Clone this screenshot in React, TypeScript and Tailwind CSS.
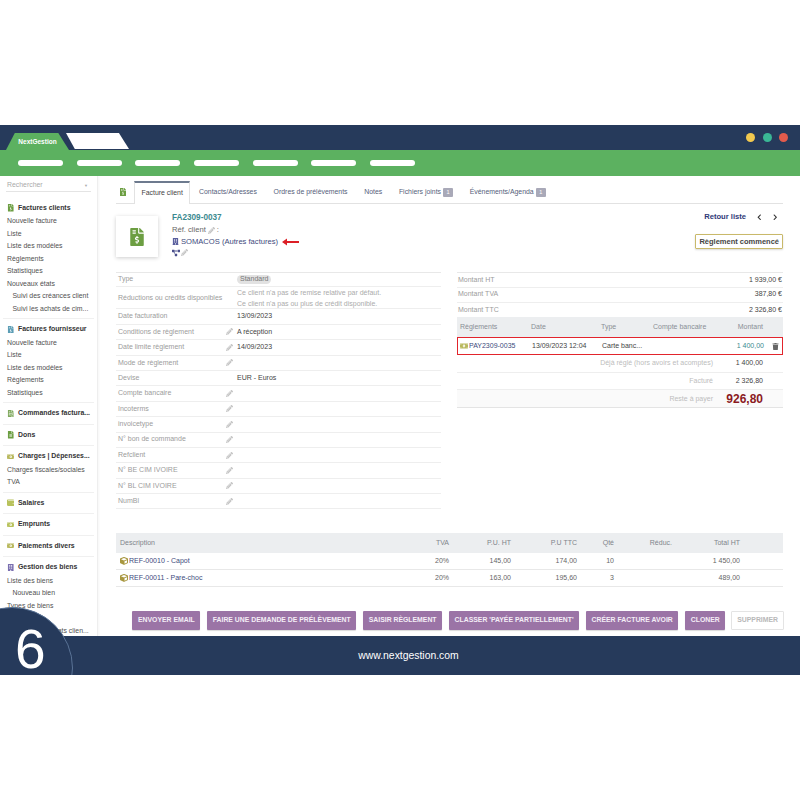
import React from "react";
import {
  FaBuilding,
  FaChevronLeft,
  FaChevronRight,
  FaCube,
  FaFileInvoice,
  FaFileInvoiceDollar,
  FaFileAlt,
  FaMoneyBillAlt,
  FaPencilAlt,
  FaProjectDiagram,
  FaTrash,
  FaWallet,
} from "react-icons/fa";

type Section = {
  title: string;
  icon: React.ReactNode;
  items?: { label: string; sub?: boolean }[];
};

const sections: Section[] = [
  {
    title: "Factures fournisseur",
    icon: <FaFileInvoiceDollar className="text-[#5b9db5]" />,
    items: [
      { label: "Nouvelle facture" },
      { label: "Liste" },
      { label: "Liste des modèles" },
      { label: "Règlements" },
      { label: "Statistiques" },
    ],
  },
  { title: "Commandes factura...", icon: <FaFileInvoice className="text-[#7fa85c]" /> },
  { title: "Dons", icon: <FaFileAlt className="text-[#6c9e42]" /> },
  {
    title: "Charges | Dépenses...",
    icon: <FaMoneyBillAlt className="text-[#b8b85c]" />,
    items: [{ label: "Charges fiscales/sociales" }, { label: "TVA" }],
  },
  { title: "Salaires", icon: <FaWallet className="text-[#b8c25c]" /> },
  { title: "Emprunts", icon: <FaMoneyBillAlt className="text-[#b8c25c]" /> },
  { title: "Paiements divers", icon: <FaMoneyBillAlt className="text-[#b8b85c]" /> },
  {
    title: "Gestion des biens",
    icon: <FaBuilding className="text-[#7a6fb0]" />,
    items: [
      { label: "Liste des biens" },
      { label: "Nouveau bien", sub: true },
      { label: "Types de biens" },
      { label: "Nouveau", sub: true },
      { label: "Suivi des contrats clien...", sub: true },
    ],
  },
];

const firstItems = [
  { label: "Nouvelle facture" },
  { label: "Liste" },
  { label: "Liste des modèles" },
  { label: "Règlements" },
  { label: "Statistiques" },
  { label: "Nouveaux états" },
  { label: "Suivi des créances client", sub: true },
  { label: "Suivi les achats de cim...", sub: true },
];

const fields: { label: string; pencil?: boolean; value?: string }[] = [
  { label: "Date facturation", value: "13/09/2023" },
  { label: "Conditions de règlement", pencil: true, value: "A réception" },
  { label: "Date limite règlement", pencil: true, value: "14/09/2023" },
  { label: "Mode de règlement", pencil: true },
  { label: "Devise", value: "EUR - Euros" },
  { label: "Compte bancaire", pencil: true },
  { label: "Incoterms", pencil: true },
  { label: "invoicetype", pencil: true },
  { label: "N° bon de commande", pencil: true },
  { label: "Refclient", pencil: true },
  { label: "N° BE CIM IVOIRE", pencil: true },
  { label: "N° BL CIM IVOIRE", pencil: true },
  { label: "NumBl", pencil: true },
];

const lines = [
  ["REF-00010 - Capot", "20%", "145,00", "174,00", "10", "", "1 450,00"],
  ["REF-00011 - Pare-choc", "20%", "163,00", "195,60", "3", "", "489,00"],
];

const lineCols = "grid grid-cols-[300px_33px_62px_66px_37px_58px_68px_43px] items-center";
const payCols = "grid grid-cols-[74px_70px_52px_60px_50px_1fr] items-center";
const sumCols = "grid grid-cols-[256px_50px_20px] items-center";

function Pencil({ className = "" }: { className?: string }) {
  return <FaPencilAlt className={`text-[7px] text-[#c4c4c4] ${className}`} />;
}

function SideRow({ label, sub }: { label: string; sub?: boolean }) {
  return (
    <div className={`h-[12.5px] leading-[12.5px] whitespace-nowrap ${sub ? "pl-[12.5px]" : "pl-[7px]"}`}>
      {label}
    </div>
  );
}

function SideTitle({ title, icon }: { title: string; icon: React.ReactNode }) {
  return (
    <div className="h-[14px] flex items-center pl-[6.5px] font-bold text-[#333] whitespace-nowrap">
      <span className="w-[11.5px] text-[7.5px] flex">{icon}</span>
      {title}
    </div>
  );
}

function Sidebar() {
  return (
    <aside className="w-[98px] shrink-0 border-r border-[#eeeeee] text-[6.9px] text-[#505050] shadow-[1px_0_2px_rgba(0,0,0,0.04)]">
      <div className="h-[25px] pt-[4px] px-[6px]">
        <div className="h-[12px] flex items-center justify-between border-b border-[#e4e4e4] text-[#aaaaaa] pl-[1px] pr-[3px]">
          <span>Rechercher</span>
          <span className="text-[4px]">▼</span>
        </div>
      </div>
      <div className="pb-[3px]">
        <SideTitle title="Factures clients" icon={<FaFileInvoiceDollar className="text-[#6c9e42]" />} />
        {firstItems.map((it) => (
          <SideRow key={it.label} {...it} />
        ))}
      </div>
      {sections.map((s) => (
        <div key={s.title}>
          <div className="h-px mx-[3px] bg-[#f0f0f0]" />
          <div className="pt-[3.5px] pb-[3px]">
            <SideTitle title={s.title} icon={s.icon} />
            {s.items?.map((it) => (
              <SideRow key={it.label} {...it} />
            ))}
          </div>
        </div>
      ))}
    </aside>
  );
}

function Tabs() {
  const tabs: { label: string; badge?: boolean }[] = [
    { label: "Contacts/Adresses" },
    { label: "Ordres de prélèvements" },
    { label: "Notes" },
    { label: "Fichiers joints", badge: true },
    { label: "Événements/Agenda", badge: true },
  ];
  return (
    <div className="h-[23px] mt-[5px] flex items-stretch border-b border-[#e2e2e2] text-[#55607a] text-[6.9px]">
      <div className="w-[18px] pl-[3px] flex items-center">
        <FaFileInvoiceDollar className="text-[8px] text-[#6c9e42]" />
      </div>
      <div className="flex items-center px-[6.5px] h-[23px] border-x border-[#e2e2e2] border-t-2 border-t-[#6d7a8e] bg-white text-[#444]">
        Facture client
      </div>
      {tabs.map((t) => (
        <div key={t.label} className="flex items-center px-[8px] ml-[0.7px] whitespace-nowrap">
          {t.label}
          {t.badge && (
            <span className="ml-[2px] w-[10px] h-[9px] rounded-[1px] bg-[#a9a9b8] text-white text-[5.5px] leading-[9px] text-center">
              1
            </span>
          )}
        </div>
      ))}
    </div>
  );
}

function InvoiceHead() {
  return (
    <div className="h-[68px] flex justify-between">
      <div className="flex pt-[12px]">
        <div className="w-[42px] h-[41px] flex items-center justify-center bg-white shadow-[0_1px_4px_rgba(0,0,0,0.2)]">
          <FaFileInvoiceDollar className="text-[18px] text-[#6c9e42]" />
        </div>
        <div className="ml-[14px] -mt-[5px] text-[7.6px] text-[#666]">
          <div className="h-[13px] leading-[13px] font-bold text-[8.2px] text-[#3b8a8f]">FA2309-0037</div>
          <div className="h-[12px] leading-[12px] flex items-center gap-[2px]">
            Réf. client <Pencil /> :
          </div>
          <div className="h-[11px] leading-[11px] flex items-center text-[#3d4a7c]">
            <FaBuilding className="text-[7px] text-[#5a5f9e] mr-[2px]" />
            SOMACOS (Autres factures)
            <svg width="17" height="8" viewBox="0 0 17 8" className="ml-[4px]">
              <path d="M0 4 L5 0.5 L5 3 L17 3 L17 5 L5 5 L5 7.5 Z" fill="#dc1f26" />
            </svg>
          </div>
          <div className="h-[11px] flex items-center gap-[1px]">
            <FaProjectDiagram className="text-[8px] text-[#4a4f8c]" />
            <Pencil />
          </div>
        </div>
      </div>
      <div className="flex flex-col items-end pt-[7px]">
        <div className="h-[12px] flex items-center font-bold text-[7.6px] text-[#2f3a78]">
          Retour liste
          <FaChevronLeft className="ml-[10px] text-[6.5px] text-[#333]" />
          <FaChevronRight className="ml-[9px] mr-[5px] text-[6.5px] text-[#333]" />
        </div>
        <div className="mt-[11px] h-[15px] px-[3px] flex items-center rounded-[1px] border border-[#c9b96a] font-bold text-[7.5px] text-[#444] shadow-[0_1px_2px_rgba(0,0,0,0.15)]">
          Règlement commencé
        </div>
      </div>
    </div>
  );
}

function FieldTable() {
  return (
    <div className="w-[325px] border-t border-[#e8e8e8] text-[7px]">
      <div className="h-[14.4px] flex items-center border-b border-[#eeeeee] pl-[2px]">
        <span className="w-[119px] text-[#9c9c9c]">Type</span>
        <span className="px-[3px] h-[8.5px] leading-[8.5px] rounded-full bg-[#e2e2e2] text-[#777]">Standard</span>
      </div>
      <div className="h-[22px] flex items-center border-b border-[#eeeeee] pl-[2px]">
        <span className="w-[119px] text-[#9c9c9c]">Réductions ou crédits disponibles</span>
        <div className="text-[#ababab] leading-[11px] whitespace-nowrap">
          <div>Ce client n&apos;a pas de remise relative par défaut.</div>
          <div>Ce client n&apos;a pas ou plus de crédit disponible.</div>
        </div>
      </div>
      {fields.map((f) => (
        <div key={f.label} className="h-[15.4px] flex items-center border-b border-[#eeeeee] pl-[2px]">
          <span className="w-[108px] text-[#9c9c9c]">{f.label}</span>
          <span className="w-[11px] flex">{f.pencil && <Pencil />}</span>
          <span className="text-[#444]">{f.value}</span>
        </div>
      ))}
    </div>
  );
}

function AmountTable() {
  const totals = [
    ["Montant HT", "1 939,00 €"],
    ["Montant TVA", "387,80 €"],
    ["Montant TTC", "2 326,80 €"],
  ];
  return (
    <div className="w-[326px] text-[7px]">
      <div className="border-t border-[#e8e8e8]">
        {totals.map(([k, v], i) => (
          <div
            key={k}
            className={`h-[14.8px] flex items-center justify-between px-[1px] ${i < 2 ? "border-b border-[#eeeeee]" : ""}`}
          >
            <span className="text-[#9c9c9c]">{k}</span>
            <span className="text-[#444]">{v}</span>
          </div>
        ))}
      </div>
      <div className={`${payCols} h-[20px] bg-[#eceef0] text-[#8a8f96]`}>
        <span className="pl-[3px]">Règlements</span>
        <span>Date</span>
        <span>Type</span>
        <span className="whitespace-nowrap">Compte bancaire</span>
        <span className="text-right">Montant</span>
      </div>
      <div className={`${payCols} h-[18px] border-[1.5px] border-[#e2242c] text-[#444]`}>
        <span className="flex items-center pl-[2px] text-[#3d4a7c] whitespace-nowrap">
          <FaMoneyBillAlt className="text-[8px] mr-[1px] text-[#b8b85c]" />
          PAY2309-0035
        </span>
        <span className="whitespace-nowrap">13/09/2023 12:04</span>
        <span>Carte banc...</span>
        <span />
        <span className="text-right text-[#3b8a8f]">1 400,00</span>
        <span className="flex justify-end pr-[3px]">
          <FaTrash className="text-[7px] text-[#666]" />
        </span>
      </div>
      <div className={`${sumCols} h-[17.5px] border-b border-[#eeeeee]`}>
        <span className="text-right text-[#bdbdbd]">Déjà réglé (hors avoirs et acomptes)</span>
        <span className="text-right text-[#444]">1 400,00</span>
      </div>
      <div className={`${sumCols} h-[17px] border-b border-[#eeeeee]`}>
        <span className="text-right text-[#bdbdbd]">Facturé</span>
        <span className="text-right text-[#444]">2 326,80</span>
      </div>
      <div className={`${sumCols} h-[18px] border-b border-[#e4e4e4] bg-[#fafafa]`}>
        <span className="text-right text-[#bdbdbd]">Reste à payer</span>
        <span className="text-right font-bold text-[12px] text-[#8b1a1f] whitespace-nowrap">926,80</span>
      </div>
    </div>
  );
}

function LineTable() {
  return (
    <div className="mt-[24px] text-[7px]">
      <div className={`${lineCols} h-[20px] bg-[#eceef0] text-[#7f848b] text-right`}>
        <span className="text-left pl-[4px]">Description</span>
        <span>TVA</span>
        <span>P.U. HT</span>
        <span>P.U TTC</span>
        <span>Qté</span>
        <span>Réduc.</span>
        <span>Total HT</span>
      </div>
      {lines.map((row) => (
        <div key={row[0]} className={`${lineCols} h-[16.6px] border-b border-[#e8e8e8] text-[#666] text-right`}>
          <span className="flex items-center pl-[4px] text-[#3d4a7c]">
            <FaCube className="text-[8px] mr-[1px] text-[#a8973f]" />
            {row[0]}
          </span>
          {row.slice(1).map((v, i) => (
            <span key={i}>{v}</span>
          ))}
        </div>
      ))}
    </div>
  );
}

function Actions() {
  const actions = [
    "ENVOYER EMAIL",
    "FAIRE UNE DEMANDE DE PRÉLÈVEMENT",
    "SAISIR RÈGLEMENT",
    "CLASSER 'PAYÉE PARTIELLEMENT'",
    "CRÉER FACTURE AVOIR",
    "CLONER",
  ];
  return (
    <div className="mt-[24px] -mr-[1px] flex justify-end gap-[7px] text-[6.87px] font-bold">
      {actions.map((a) => (
        <button
          key={a}
          className="h-[19px] px-[5.5px] rounded-[1px] bg-[#9b74a6] text-[#f4eef6] whitespace-nowrap shadow-[0_1px_1px_rgba(0,0,0,0.15)]"
        >
          {a}
        </button>
      ))}
      <button className="h-[19px] px-[5px] -ml-[1px] rounded-[1px] border border-[#e4e4e4] bg-white text-[#b8b8b8]">
        SUPPRIMER
      </button>
    </div>
  );
}

export default function App() {
  return (
    <div className="h-[800px] bg-white font-['Liberation_Sans',Arial,sans-serif] pt-[125px]">
      <div className="relative h-[550px] overflow-hidden flex flex-col">
        <header className="h-[25px] shrink-0 bg-[#263a5b] flex items-end pl-[6px] pr-[12px] relative">
          <div className="w-[63px] h-[17px] bg-[#5cb160] [clip-path:polygon(14%_0,83%_0,100%_100%,0_100%)] flex items-center justify-center text-[6.5px] text-white font-bold">
            NextGestion
          </div>
          <div className="-ml-[3px] mb-[1px] w-[63px] h-[16px] bg-white [clip-path:polygon(0_0,84%_0,100%_100%,14%_100%)]" />
          <div className="ml-auto self-center flex gap-[7.5px]">
            <span className="w-[9px] h-[9px] rounded-full bg-[#f2c94f]" />
            <span className="w-[9px] h-[9px] rounded-full bg-[#3ab795]" />
            <span className="w-[9px] h-[9px] rounded-full bg-[#e25b4c]" />
          </div>
        </header>
        <nav className="h-[26px] shrink-0 bg-[#5cb160] flex items-center gap-[13.7px] pl-[18px]">
          {[0, 1, 2, 3, 4, 5, 6].map((n) => (
            <span key={n} className="w-[45px] h-[6.5px] rounded-full bg-white" />
          ))}
        </nav>
        <div className="h-[460px] shrink-0 flex overflow-hidden">
          <Sidebar />
          <main className="flex-1 pl-[18px] pr-[17px]">
            <Tabs />
            <InvoiceHead />
            <div className="flex justify-between items-start">
              <FieldTable />
              <AmountTable />
            </div>
            <LineTable />
            <Actions />
          </main>
        </div>
        <footer className="h-[39px] shrink-0 bg-[#263a5b] flex items-center justify-center pl-[17px] text-[10.4px] text-white">
          www.nextgestion.com
        </footer>
        <div className="absolute left-[-49px] top-[482px] w-[122px] h-[122px] rounded-full bg-[#263a5b] border border-[#5a7396]" />
        <span className="absolute left-[15px] top-[499px] text-[55px] leading-[50px] text-white">6</span>
      </div>
    </div>
  );
}
